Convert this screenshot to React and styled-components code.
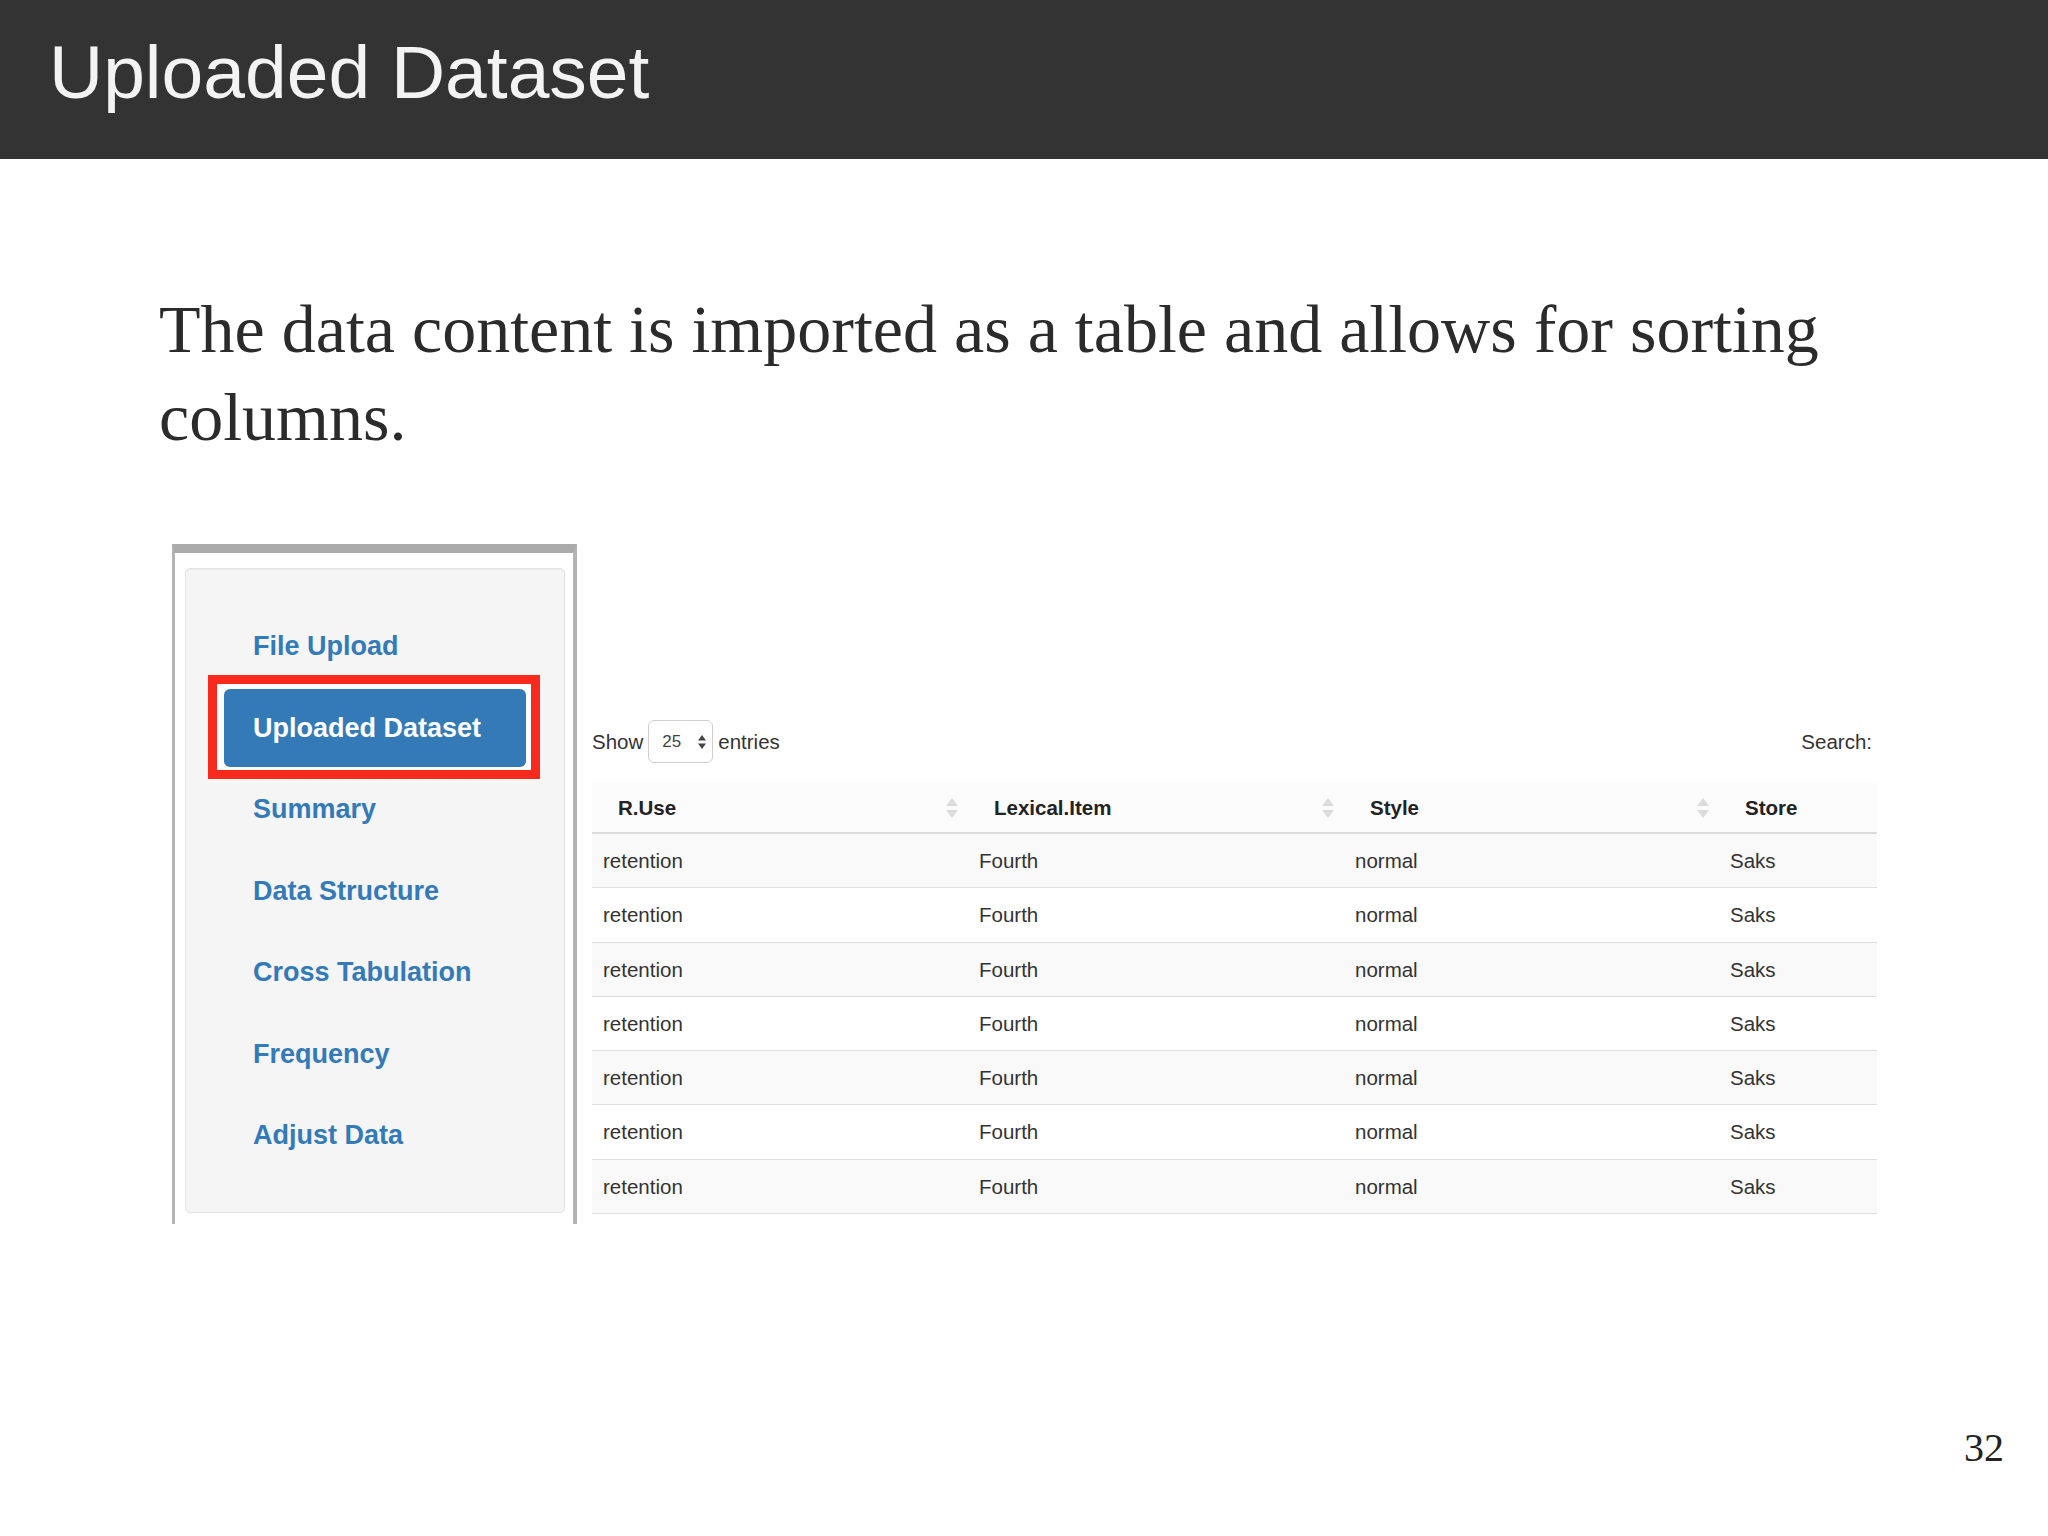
import React from "react";
import styled, { createGlobalStyle } from "styled-components";

const GlobalStyle = createGlobalStyle`
  html, body {
    margin: 0;
    padding: 0;
    background: #ffffff;
  }
  body {
    width: 2048px;
    height: 1536px;
    overflow: hidden;
    font-family: "Liberation Sans", Arial, sans-serif;
  }
`;

const navItems = [
  "File Upload",
  "Uploaded Dataset",
  "Summary",
  "Data Structure",
  "Cross Tabulation",
  "Frequency",
  "Adjust Data",
];

const columns = [
  { title: "R.Use", width: 376, sortable: true },
  { title: "Lexical.Item", width: 376, sortable: true },
  { title: "Style", width: 375, sortable: true },
  { title: "Store", width: 158, sortable: false },
];

const rows = Array.from({ length: 7 }, () => ["retention", "Fourth", "normal", "Saks"]);

function SortIcon() {
  return (
    <svg width="12" height="20" viewBox="0 0 12 20">
      <path d="M6 0 L12 8 L0 8 Z" fill="#dcdcdc" />
      <path d="M6 20 L12 12 L0 12 Z" fill="#dcdcdc" />
    </svg>
  );
}

function SelectArrows() {
  return (
    <svg width="8" height="16" viewBox="0 0 8 16">
      <path d="M4 1 L8 6.5 L0 6.5 Z" fill="#444" />
      <path d="M4 15 L8 9.5 L0 9.5 Z" fill="#444" />
    </svg>
  );
}

export default function App() {
  return (
    <Slide>
      <GlobalStyle />
      <TitleBar>
        <Title>Uploaded Dataset</Title>
      </TitleBar>

      <Body>
        <Lead>The data content is imported as a table and allows for sorting columns.</Lead>

        <Shot>
          <Frame>
            <Well>
              {navItems.map((item) =>
                item === "Uploaded Dataset" ? (
                  <Highlighted key={item}>
                    <NavPill active>{item}</NavPill>
                  </Highlighted>
                ) : (
                  <NavPill key={item}>{item}</NavPill>
                )
              )}
            </Well>
          </Frame>

          <TableSection>
            <Controls>
              <Length>
                Show
                <Select>
                  <span>25</span>
                  <SelectArrows />
                </Select>
                entries
              </Length>
              <SearchLabel>Search:</SearchLabel>
            </Controls>

            <DataTable>
              <colgroup>
                {columns.map((c) => (
                  <col key={c.title} style={{ width: c.width }} />
                ))}
              </colgroup>
              <thead>
                <tr>
                  {columns.map((c) => (
                    <Th key={c.title}>
                      <HeadCell>
                        <span>{c.title}</span>
                        {c.sortable && <SortIcon />}
                      </HeadCell>
                    </Th>
                  ))}
                </tr>
              </thead>
              <tbody>
                {rows.map((r, i) => (
                  <Tr key={i} odd={i % 2 === 0}>
                    {r.map((v, j) => (
                      <Td key={j}>{v}</Td>
                    ))}
                  </Tr>
                ))}
              </tbody>
            </DataTable>
          </TableSection>
        </Shot>
      </Body>

      <PageNumber>32</PageNumber>
    </Slide>
  );
}

const Slide = styled.div`
  position: relative;
  width: 2048px;
  height: 1536px;
  background: #ffffff;
`;

const TitleBar = styled.header`
  height: 159px;
  background: #333333;
  padding: 35px 0 0 49px;
  box-sizing: border-box;
`;

const Title = styled.h1`
  margin: 0;
  font-family: "Liberation Sans", Arial, sans-serif;
  font-weight: normal;
  font-size: 75px;
  line-height: 1;
  color: #f3f3f3;
`;

const Body = styled.main`
  padding: 126px 0 0 159px;
`;

const Lead = styled.p`
  margin: 0;
  width: 1760px;
  font-family: "Liberation Serif", "Times New Roman", serif;
  font-size: 68px;
  line-height: 88px;
  color: #2b2b2b;
`;

const Shot = styled.div`
  display: flex;
  align-items: flex-start;
  gap: 15px;
  margin: 83px 0 0 13px;
`;

const Frame = styled.div`
  width: 405px;
  box-sizing: border-box;
  border-top: 9px solid #ababab;
  border-left: 3px solid #b4b4b4;
  border-right: 4px solid #b4b4b4;
  padding: 15px 8px 11px 10px;
`;

const Well = styled.nav`
  display: flex;
  flex-direction: column;
  gap: 3.5px;
  padding: 38px;
  background: #f5f5f5;
  border: 1px solid #e3e3e3;
  border-radius: 5px;
  box-shadow: inset 0 1px 1px rgba(0, 0, 0, 0.04);
`;

const Highlighted = styled.div`
  position: relative;

  &::before {
    content: "";
    position: absolute;
    top: -14px;
    left: -16px;
    right: -14px;
    bottom: -12px;
    border: 9px solid #f82a1d;
    background: #ffffff;
  }
`;

const NavPill = styled.div`
  position: relative;
  height: 78px;
  padding-left: 29px;
  border-radius: 6px;
  font-family: "Liberation Sans", Arial, sans-serif;
  font-weight: bold;
  font-size: 27px;
  line-height: 78px;
  white-space: nowrap;
  color: ${(p) => (p.active ? "#ffffff" : "#337ab7")};
  background: ${(p) => (p.active ? "#337ab7" : "transparent")};
`;

const TableSection = styled.section`
  width: 1285px;
  margin-top: 176px;
  font-family: "Liberation Sans", Arial, sans-serif;
  font-size: 20.5px;
  color: #333333;
`;

const Controls = styled.div`
  display: flex;
  justify-content: space-between;
  align-items: center;
  height: 43px;
`;

const Length = styled.div`
  display: flex;
  align-items: center;
  gap: 5px;
`;

const Select = styled.div`
  display: flex;
  align-items: center;
  justify-content: space-between;
  box-sizing: border-box;
  width: 65px;
  height: 43px;
  padding: 0 6px 0 13px;
  border: 1px solid #cfcfcf;
  border-radius: 6px;
  font-size: 17px;
  color: #444;
`;

const SearchLabel = styled.div`
  margin-right: 5px;
`;

const DataTable = styled.table`
  width: 100%;
  margin-top: 20px;
  border-collapse: collapse;
  table-layout: fixed;
`;

const Th = styled.th`
  height: 49px;
  padding: 0 10px 0 26px;
  text-align: left;
  font-weight: bold;
  color: #222;
  background: #fcfcfc;
  border-bottom: 2px solid #dcdcdc;
`;

const HeadCell = styled.div`
  display: flex;
  align-items: center;
  justify-content: space-between;
  line-height: 49px;
`;

const Tr = styled.tr`
  background: ${(p) => (p.odd ? "#f9f9f9" : "#ffffff")};
`;

const Td = styled.td`
  padding: 0 11px;
  line-height: 53.3px;
  border-bottom: 1px solid #dedede;
  white-space: nowrap;
`;

const PageNumber = styled.div`
  position: absolute;
  left: 1964px;
  top: 1428px;
  font-family: "Liberation Serif", "Times New Roman", serif;
  font-size: 40px;
  line-height: 1;
  color: #222;
  font-variant-numeric: oldstyle-nums;
`;
